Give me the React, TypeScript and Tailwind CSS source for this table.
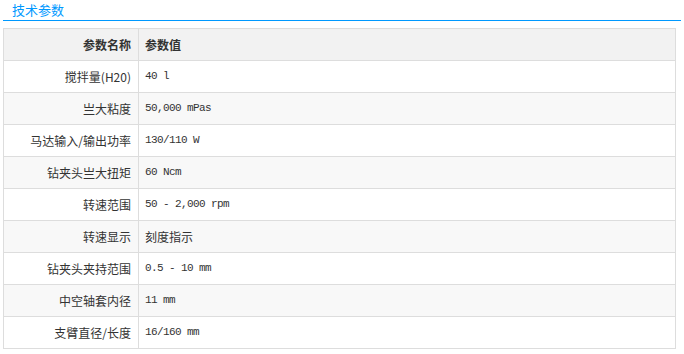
const rows: [string, string][] = [
  ["搅拌量(H20)", "40 l"],
  ["亗大粘度", "50,000 mPas"],
  ["马达输入/输出功率", "130/110 W"],
  ["钻夹头亗大扭矩", "60 Ncm"],
  ["转速范围", "50 - 2,000 rpm"],
  ["转速显示", "刻度指示"],
  ["钻夹头夹持范围", "0.5 - 10 mm"],
  ["中空轴套内径", "11 mm"],
  ["支臂直径/长度", "16/160 mm"],
];

const cjk = "font-['SimSun','Noto_Sans_CJK_SC',sans-serif]";
const mono = "font-['Liberation_Mono','Noto_Sans_CJK_SC',monospace]";

export default function App() {
  return (
    <div className={`w-[684px] h-[354px] bg-white px-[3px] ${cjk}`}>
      <div className="h-[21px] border-b border-[#0099ff] pl-[9px]">
        <span className="block pt-[2px] text-[13px] leading-[16px] text-[#0099ff]">
          技术参数
        </span>
      </div>
      <table className="mt-[7px] w-[673px] border-collapse border border-[#dddddd] text-[12px] text-[#333333]">
        <colgroup>
          <col className="w-[135px]" />
          <col />
        </colgroup>
        <thead>
          <tr className="h-[32px] bg-[#f2f2f2]">
            <th className="border border-[#dddddd] pr-[7px] text-right font-bold">
              参数名称
            </th>
            <th className="border border-[#dddddd] pl-[6px] text-left font-bold">
              参数值
            </th>
          </tr>
        </thead>
        <tbody>
          {rows.map(([name, value], i) => (
            <tr
              key={name}
              className={`h-[32px] ${i % 2 === 1 ? "bg-[#f8f8f8]" : "bg-white"}`}
            >
              <td className="border border-[#dddddd] pr-[7px] text-right">
                {name}
              </td>
              <td
                className={`border border-[#dddddd] pl-[6px] text-left ${
                  /[\u4e00-\u9fff]/.test(value)
                    ? ""
                    : `${mono} text-[11px] tracking-[-0.6px]`
                }`}
              >
                {value}
              </td>
            </tr>
          ))}
        </tbody>
      </table>
    </div>
  );
}
